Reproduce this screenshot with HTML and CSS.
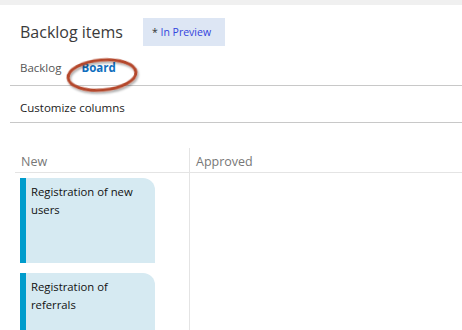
FILE: index.html
```html
<!DOCTYPE html>
<html lang="en">

<head>
    <meta charset="UTF-8">
    <title>Backlog items</title>
    <link rel="stylesheet" href="styles.css">
</head>

<body>
    <div class="topbar"></div>
    <div class="header">
        <h1>Backlog items</h1>
        <span class="preview">* <span class="preview-link">In Preview</span></span>
    </div>
    <div class="tabs">
        <a href="#" class="tab">Backlog</a>
        <a href="#" class="tab active">Board</a>
        <svg class="circle" width="80" height="42" viewBox="0 0 80 42">
            <defs>
                <filter id="shadow" x="-20%" y="-20%" width="140%" height="160%">
                    <feDropShadow dx="1" dy="2" stdDeviation="1.2" flood-color="#000" flood-opacity="0.35"/>
                </filter>
            </defs>
            <ellipse cx="40" cy="19" rx="34" ry="15" transform="rotate(-5 40 19)" fill="none" stroke="#b4472c" stroke-width="3" filter="url(#shadow)"/>
        </svg>
    </div>
    <div class="toolbar">Customize columns</div>
    <div class="board">
        <div class="column">
            <div class="column-head">New</div>
            <div class="cards">
                <div class="card">Registration of new users</div>
                <div class="card">Registration of referrals</div>
            </div>
        </div>
        <div class="column">
            <div class="column-head">Approved</div>
        </div>
    </div>
</body>

</html>
```

FILE: styles.css
```css
body {
    font-family: 'Segoe UI', 'Open Sans', sans-serif;
    margin: 0;
    padding: 0;
    background-color: #fff;
    color: #222;
    overflow: hidden;
}

.topbar {
    height: 5px;
    background-color: #f0f0f0;
}

.header {
    display: flex;
    align-items: center;
    padding: 13px 0 0 20px;
    height: 28px;
}

.header h1 {
    margin: 0 20px 0 0;
    font-size: 16px;
    font-weight: normal;
    color: #3a3a3a;
}

.preview {
    background-color: #dde6f4;
    height: 28px;
    line-height: 28px;
    padding: 0 14px 0 9px;
    font-size: 10.5px;
    color: #333;
}

.preview-link {
    color: #3344dd;
}

.tabs {
    position: relative;
    display: flex;
    gap: 20px;
    margin-left: 10px;
    padding: 14px 0 0 10px;
    height: 25px;
    border-bottom: 1px solid #c8c8c8;
}

.tab {
    font-size: 11.5px;
    color: #555;
    text-decoration: none;
}

.tab.active {
    color: #106ebe;
    font-weight: bold;
}

.circle {
    position: absolute;
    left: 52px;
    top: 10px;
}

.toolbar {
    margin-left: 10px;
    padding: 14px 0 0 10px;
    height: 22px;
    border-bottom: 1px solid #c8c8c8;
    font-size: 11.5px;
    color: #222;
}

.board {
    display: flex;
    height: 183px;
    overflow: hidden;
    margin: 25px 0 0 15px;
}

.column {
    width: 174px;
}

.column + .column {
    flex-grow: 1;
    border-left: 1px solid #e4e4e4;
}

.column-head {
    padding: 5px 0 0 6px;
    height: 19px;
    font-size: 12.5px;
    color: #777;
    border-bottom: 1px solid #e4e4e4;
}

.cards {
    padding: 5px 0 0 5px;
    display: flex;
    flex-direction: column;
    gap: 10px;
}

.card {
    flex-shrink: 0;
    width: 118px;
    height: 75px;
    padding: 5px 6px 5px 5px;
    background-color: #d6eaf2;
    border-left: 6px solid #009ccc;
    border-top-right-radius: 12px;
    font-size: 11.3px;
    line-height: 17.5px;
    color: #111;
}
```
